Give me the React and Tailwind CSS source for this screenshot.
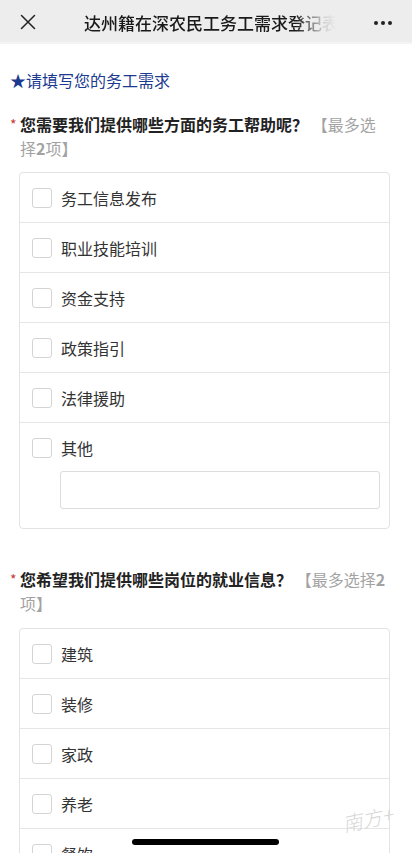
import React from "react";

const font = { fontFamily: '"Noto Sans CJK SC", "Noto Sans", sans-serif' };

function Checkbox() {
  return <span className="block w-[20px] h-[20px] shrink-0 rounded-[3px] border border-[#d4d4d4] bg-white" />;
}

function Row({ label, first, children }) {
  return (
    <div className={(first ? "" : "border-t border-[#e6e6e6] ") + "pl-[12px] pr-[9px]"}>
      <div className="flex items-center h-[49px] gap-[9px]">
        <Checkbox />
        <span className="text-[16px] leading-[24px] text-[#333]">{label}</span>
      </div>
      {children}
    </div>
  );
}

function Question({ title, tail }) {
  return (
    <div className="flex pl-[10px] pr-[22px]">
      <span className="w-[10px] shrink-0 text-[#c53a32] text-[14px] leading-[20px] mt-[2px]">*</span>
      <div className="flex-1 text-[16px] leading-[24px]">
        <span className="font-bold text-[#222]">{title}？</span>{" "}
        <span className="text-[#a3a3a3]">{tail}</span>
      </div>
    </div>
  );
}

export default function App() {
  const q1 = ["务工信息发布", "职业技能培训", "资金支持", "政策指引", "法律援助"];
  const q2 = ["建筑", "装修", "家政", "养老", "餐饮"];
  return (
    <div className="relative w-[412px] h-[853px] overflow-hidden bg-white" style={font}>
      {/* header */}
      <div className="h-[42px] bg-[#ededed] flex items-center">
        <div className="w-[56px] flex justify-center pt-[2px]">
          <svg width="16" height="16" viewBox="0 0 16 16" fill="none" stroke="#222" strokeWidth="1.5" strokeLinecap="round">
            <path d="M1.5 1.5 L14.5 14.5 M14.5 1.5 L1.5 14.5" />
          </svg>
        </div>
        <div className="ml-[28px] w-[252px] overflow-hidden whitespace-nowrap text-[17px] leading-[24px] font-medium text-[#1a1a1a] pt-[4px] [mask-image:linear-gradient(90deg,#000_84%,rgba(0,0,0,0.15)_95%,transparent_100%)]">
          达州籍在深农民工务工需求登记表
        </div>
        <div className="flex-1 flex justify-end pr-[20px] pt-[4px]">
          <div className="flex gap-[3px]">
            <span className="w-[4px] h-[4px] rounded-full bg-[#222]" />
            <span className="w-[4px] h-[4px] rounded-full bg-[#222]" />
            <span className="w-[4px] h-[4px] rounded-full bg-[#222]" />
          </div>
        </div>
      </div>
      <div className="h-[2px] bg-[#f4f4f4]" />

      {/* section title */}
      <div className="pl-[10px] pt-[24px] text-[16px] leading-[24px] text-[#1c3a8f]">★请填写您的务工需求</div>

      {/* Q1 */}
      <div className="mt-[20px]">
        <Question
          title="您需要我们提供哪些方面的务工帮助呢"
          tail={<>【最多选择<b className="font-bold">2</b>项】</>}
        />
      </div>
      <div className="mt-[12px] ml-[19px] mr-[22px] border border-[#e3e3e3] rounded-[4px]">
        {q1.map((l, i) => (
          <Row key={l} label={l} first={i === 0} />
        ))}
        <Row label="其他">
          <div className="ml-[28px] mt-[-1px] mb-[19px] h-[38px] border border-[#dcdcdc] rounded-[3px]" />
        </Row>
      </div>

      {/* Q2 */}
      <div className="mt-[38px]">
        <Question
          title="您希望我们提供哪些岗位的就业信息"
          tail={<>【最多选择<b className="font-bold">2</b>项】</>}
        />
      </div>
      <div className="mt-[13px] ml-[19px] mr-[22px] border border-[#e3e3e3] rounded-[4px]">
        {q2.map((l, i) => (
          <Row key={l} label={l} first={i === 0} />
        ))}
      </div>

      {/* watermark */}
      <div className="absolute left-[342px] top-[806px] text-[20px] leading-[26px] italic font-light text-[#d6d6d6] -rotate-12 select-none" style={{ fontFamily: '"Noto Sans CJK SC", serif' }}>
        南方+
      </div>

      {/* home indicator */}
      <div className="absolute left-[132px] top-[839px] w-[147px] h-[6px] rounded-full bg-black" />
    </div>
  );
}
